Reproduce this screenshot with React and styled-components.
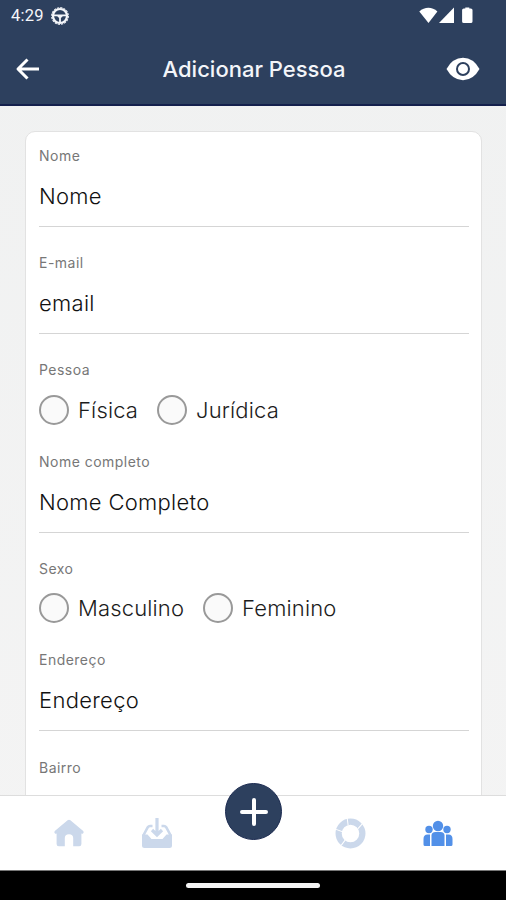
import React from "react";
import styled, { createGlobalStyle } from "styled-components";

const navy = "#2d405e";

const GlobalStyle = createGlobalStyle`
  *, *::before, *::after { box-sizing: border-box; }
  body { margin: 0; background: #f1f1f1; font-family: Inter, "Liberation Sans", sans-serif; }
`;

const Screen = styled.div`
  width: 506px;
  height: 900px;
  display: flex;
  flex-direction: column;
  overflow: hidden;
  background: linear-gradient(#f0f1f1, #f4f4f4);
`;

const Header = styled.header`
  flex: none;
  height: 106px;
  background: ${navy};
  border-bottom: 2px solid #14204c;
  color: #fff;
`;

const StatusBar = styled.div`
  height: 32px;
  display: flex;
  align-items: center;
  justify-content: space-between;
  padding: 0 31px 0 11px;
`;

const StatusGroup = styled.div`
  display: flex;
  align-items: center;
  gap: ${(p) => p.$gap}px;
`;

const Clock = styled.span`
  font: 400 16.5px/20px Roboto, sans-serif;
  letter-spacing: 0.2px;
  color: #f4f6fa;
`;

const TitleBar = styled.div`
  height: 73px;
  display: grid;
  grid-template-columns: 60px 1fr 60px;
  align-items: center;
  padding: 0 26px 0 14px;
`;

const Title = styled.h1`
  margin: 0 -7px 0 7px;
  text-align: center;
  font-size: 22px;
  font-weight: 500;
  line-height: 30px;
  color: #f3f5f9;
`;

const IconButton = styled.button`
  border: 0;
  padding: 0;
  background: none;
  color: #fff;
  display: flex;
  justify-content: ${(p) => (p.$end ? "flex-end" : "flex-start")};
`;

const Content = styled.main`
  flex: 1;
  min-height: 0;
  overflow: hidden;
  padding: 25px 24px 0 25px;
`;

const Card = styled.form`
  height: 900px;
  padding: 14px 12px 0 13px;
  background: #fff;
  border: 1px solid #e2e2e2;
  border-radius: 10px;
`;

const Field = styled.div`
  height: ${(p) => (p.$choices ? 91.6 : 107.1)}px;
`;

const Label = styled.div`
  height: 20px;
  font-size: 14px;
  line-height: 20px;
  letter-spacing: 0.48px;
  color: #777;
`;

const Value = styled.div`
  height: 61px;
  border-bottom: 1.5px solid #d5d5d5;
  font-size: 22px;
  font-weight: 300;
  line-height: 61px;
  letter-spacing: 0.3px;
  color: #111;
`;

const Choices = styled.div`
  height: 59px;
  display: flex;
  align-items: center;
  gap: 19px;
`;

const Choice = styled.label`
  display: flex;
  align-items: center;
  gap: 9px;
  font-size: 22px;
  font-weight: 300;
  line-height: 30px;
  letter-spacing: 0.15px;
  color: #1c1c1c;
`;

const Radio = styled.span`
  width: 30px;
  height: 30px;
  border: 2px solid #999;
  border-radius: 50%;
  background: #fafafa;
`;

const TabBar = styled.nav`
  flex: none;
  height: 75px;
  display: grid;
  grid-template-columns: 88px 88px 1fr 88px 88px;
  padding: 0 24px 0 25px;
  background: #fff;
  border-top: 1.5px solid #ddd;
`;

const Tab = styled.div`
  display: flex;
  align-items: center;
  justify-content: center;
  color: ${(p) => (p.$active ? "#5290e8" : "#cbd8eb")};
`;

const AddButton = styled.button`
  justify-self: center;
  margin-top: -13px;
  width: 57px;
  height: 57px;
  padding: 0;
  border: 1px solid #1c2b51;
  border-radius: 50%;
  background: ${navy};
  display: flex;
  align-items: center;
  justify-content: center;
`;

const SystemBar = styled.div`
  flex: none;
  height: 30px;
  background: #000;
  border-top: 1px solid #777;
  display: flex;
  align-items: center;
  justify-content: center;
`;

const Handle = styled.div`
  width: 134px;
  height: 5px;
  border-radius: 3px;
  background: #f4f4f4;
`;

const WheelIcon = () => (
  <svg width="18" height="18" viewBox="0 0 18 18" fill="none" stroke="#f4f6fa">
    <circle cx="9" cy="9" r="7" strokeWidth="2.2" />
    <circle cx="9" cy="9" r="8.3" strokeWidth="1.2" strokeDasharray="2.2 1.06" />
    <path d="M2.5 8.3h13M9 9v6" strokeWidth="1.8" />
    <path d="M6.5 8h5v1.5l-1.300 1.300H7.800L6.500 9.500z" fill="#f4f6fa" stroke="none" />
  </svg>
);

const SignalIcons = () => (
  <svg width="56" height="18" viewBox="0 0 56 18" fill="#fff">
    <path d="M0.3 4.500C5.700-.5 13-.5 18.400 4.500L9.500 16z" />
    <path d="M35 .5v15.500H20z" />
    <path d="M46.300 .5h4v1h1.500q1.700 0 1.700 1.500V14.500q0 1.500-1.700 1.500h-7q-1.700 0-1.700-1.500V3q0-1.500 1.700-1.500h1.500z" />
  </svg>
);

const BackIcon = () => (
  <svg width="28" height="24" viewBox="0 0 28 24" fill="none" stroke="currentColor" strokeWidth="3" strokeLinejoin="round">
    <path d="M4 12h21M13.500 2.500L4 12l9.500 9.500" />
  </svg>
);

const EyeIcon = () => (
  <svg width="34" height="24" viewBox="0 0 34 24">
    <path d="M0.500 12Q6.500 1 17 0.800Q27.500 1 33.500 12Q27.500 23 17 23.200Q6.500 23 0.500 12z" fill="#fff" />
    <circle cx="17" cy="12" r="6" fill="none" stroke={navy} strokeWidth="2" />
  </svg>
);

const HomeIcon = () => (
  <svg width="32" height="32" viewBox="0 0 32 32" fill="currentColor">
    <path d="M14.600 3.200Q16 2.200 17.400 3.200L30.200 14q1 1.200 0 2.200-.7.8-1.800.4V27q0 2.200-2.200 2.200h-6V21q0-3.800-4.200-3.800T11.800 21v8.200H5.800Q3.600 29.200 3.600 27V16.600q-1.100.4-1.800-.4-1-1 0-2.200z" />
  </svg>
);

const InboxIcon = () => (
  <svg width="32" height="32" viewBox="0 0 32 32" fill="currentColor">
    <path d="M1 17.500h5.500l4 4.500h11l4-4.500H31V28.500q0 2.500-2.500 2.500h-25Q1 31 1 28.500z" />
    <path d="M2.300 18.500L6.800 10.200q.8-1.200 2.200-1.200h2.500M29.700 18.500l-4.500-8.300Q24.400 9 23 9h-2.500" fill="none" stroke="currentColor" strokeWidth="2.600" />
    <path d="M16 1v16M11 13l5 5 5-5" fill="none" stroke="currentColor" strokeWidth="3.200" />
  </svg>
);

const RingIcon = () => (
  <svg width="31" height="31" viewBox="0 0 30 30" fill="none">
    <circle cx="15" cy="15" r="11.500" stroke="#cbd8eb" strokeWidth="6" />
    <path d="M12.700 7L11.800 0M22 10.500L27 5M8 13.500L1 11M10.500 20.500L6 26.500" stroke="#fff" strokeWidth="1" />
  </svg>
);

const PeopleIcon = () => (
  <svg width="30" height="28" viewBox="0 0 30 28" fill="currentColor">
    <circle cx="15" cy="7" r="5.200" />
    <circle cx="6" cy="10.500" r="3.700" />
    <circle cx="24" cy="10.500" r="3.700" />
    <path d="M8.500 27V16.500Q8.500 13 12.500 13h5q4 0 4 3.500V27z" />
    <path d="M7 15.500V27H2q-1.500 0-1.500-1.500V20q0-4.500 4-4.500zM23 15.500V27H28q1.500 0 1.500-1.500V20q0-4.500-4-4.500z" />
  </svg>
);

const PlusIcon = () => (
  <svg width="30" height="30" viewBox="0 0 30 30" stroke="#fff" strokeWidth="4" strokeLinecap="round">
    <path d="M15 3v24M3 15h24" />
  </svg>
);

const fields = [
  { label: "Nome", value: "Nome" },
  { label: "E-mail", value: "email" },
  { label: "Pessoa", choices: ["Física", "Jurídica"] },
  { label: "Nome completo", value: "Nome Completo" },
  { label: "Sexo", choices: ["Masculino", "Feminino"] },
  { label: "Endereço", value: "Endereço" },
  { label: "Bairro", value: "" },
];

export default function App() {
  return (
    <>
      <GlobalStyle />
      <Screen>
        <Header>
          <StatusBar>
            <StatusGroup $gap={7}>
              <Clock>4:29</Clock>
              <WheelIcon />
            </StatusGroup>
            <SignalIcons />
          </StatusBar>
          <TitleBar>
            <IconButton aria-label="Voltar"><BackIcon /></IconButton>
            <Title>Adicionar Pessoa</Title>
            <IconButton $end aria-label="Visualizar"><EyeIcon /></IconButton>
          </TitleBar>
        </Header>
        <Content>
          <Card>
            {fields.map(({ label, value, choices }) => (
              <Field key={label} $choices={!!choices}>
                <Label>{label}</Label>
                {choices ? (
                  <Choices>
                    {choices.map((name) => (
                      <Choice key={name}><Radio />{name}</Choice>
                    ))}
                  </Choices>
                ) : (
                  <Value>{value}</Value>
                )}
              </Field>
            ))}
          </Card>
        </Content>
        <TabBar>
          <Tab><HomeIcon /></Tab>
          <Tab><InboxIcon /></Tab>
          <AddButton aria-label="Adicionar"><PlusIcon /></AddButton>
          <Tab><RingIcon /></Tab>
          <Tab $active><PeopleIcon /></Tab>
        </TabBar>
        <SystemBar><Handle /></SystemBar>
      </Screen>
    </>
  );
}
